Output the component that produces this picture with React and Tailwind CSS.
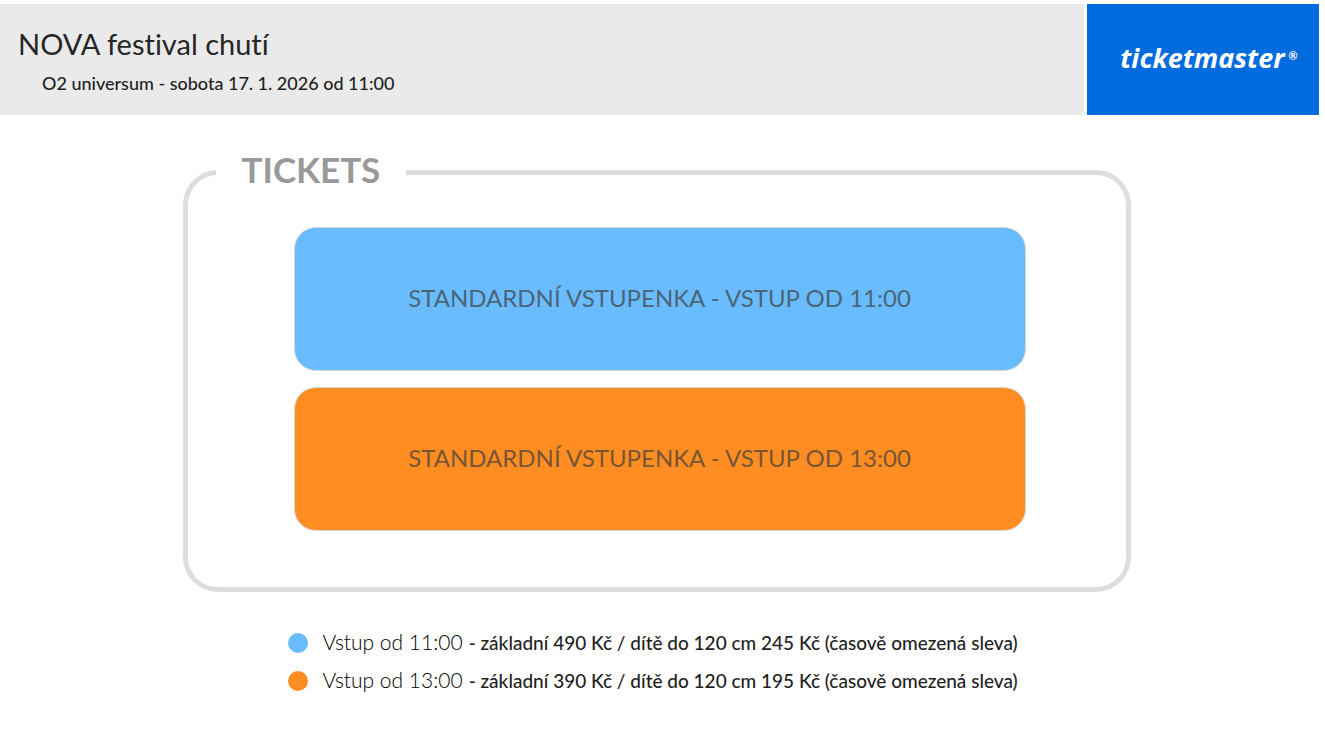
import React from 'react';

const tickets = [
  {
    id: 'vstup-11',
    button: 'STANDARDNÍ VSTUPENKA - VSTUP OD 11:00',
    title: 'Vstup od 11:00',
    prices: '- základní 490 Kč / dítě do 120 cm 245 Kč (časově omezená sleva)',
    color: 'bg-[#69bcff]',
    text: 'text-[#4b6577]',
  },
  {
    id: 'vstup-13',
    button: 'STANDARDNÍ VSTUPENKA - VSTUP OD 13:00',
    title: 'Vstup od 13:00',
    prices: '- základní 390 Kč / dítě do 120 cm 195 Kč (časově omezená sleva)',
    color: 'bg-[#ff8d22]',
    text: 'text-[#785635]',
  },
];

const Header = () => {
  return (
    <header className="flex gap-[3px]">
      <div className="flex-1 bg-[#eaeaea] px-[18px] pt-6 pb-5">
        <h1 className="text-[29px] leading-8 text-[#262626]">NOVA festival chutí</h1>
        <p className="mt-[11px] pl-6 text-lg leading-6 font-medium text-[#1f1f1f]">O2 universum - sobota 17. 1. 2026 od 11:00</p>
      </div>
      <a href="/" className="flex w-[232px] items-center justify-center gap-1 pb-1 pl-3 bg-[#026cdf] text-white">
        <span className="font-['Open_Sans',sans-serif] text-[27px] leading-8 font-bold italic">ticketmaster</span>
        <span className="pb-1 text-[11px] leading-4 font-bold">®</span>
      </a>
    </header>
  );
};

const App = () => {
  return (
    <div className="bg-white pt-1 pr-1.5 font-['Lato',sans-serif] [font-variant-ligatures:none]">
      <Header />
      <main className="flex flex-col items-center pt-[38px] pr-1.5 pb-8">
        <fieldset className="w-full max-w-[948px] rounded-[35px] border-5 border-[#dddddd] pb-14 pl-7">
          <legend className="px-[26px] pb-1.5 text-[35px] leading-8 font-bold text-[#999999]">TICKETS</legend>
          <div className="flex flex-col gap-4 pt-9 pr-[100px] pl-[78px]">
            {tickets.map((ticket) => (
              <button
                key={ticket.id}
                type="button"
                className={`h-36 w-full cursor-pointer rounded-[22px] border border-[#d6d6d6] pb-0.5 text-2xl ${ticket.color} ${ticket.text}`}
              >
                {ticket.button}
              </button>
            ))}
          </div>
        </fieldset>
        <ul className="mt-9 flex w-full max-w-[738px] flex-col gap-2">
          {tickets.map((ticket) => (
            <li key={ticket.id} className="flex min-h-[30px] items-center gap-[15px]">
              <span className={`size-5 shrink-0 rounded-full ${ticket.color}`} />
              <p className="flex items-baseline gap-1.5 pb-0.5 text-[19px] leading-6 font-medium text-[#1f1f1f]">
                <span className="shrink-0 text-[21px] font-light text-black">{ticket.title}</span>
                <span>{ticket.prices}</span>
              </p>
            </li>
          ))}
        </ul>
      </main>
    </div>
  );
};

export default App;
